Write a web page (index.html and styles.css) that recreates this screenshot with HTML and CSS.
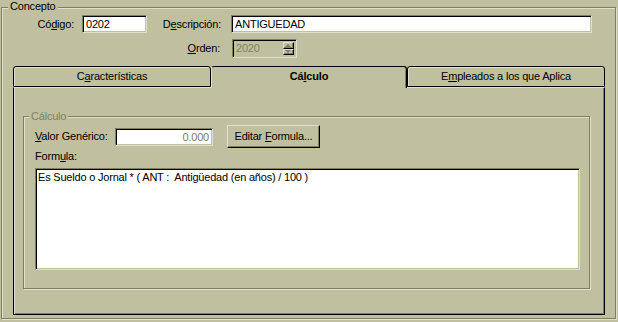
FILE: index.html
```html
<!DOCTYPE html>
<html lang="es">
<head>
    <meta charset="UTF-8">
    <title>Concepto</title>
    <link rel="stylesheet" href="styles.css">
</head>
<body>
    <div class="group concepto">
        <div class="group-title">Concepto</div>

        <div class="fields">
            <label class="lbl">Có<u>d</u>igo:</label>
            <div class="edit codigo">0202</div>
            <label class="lbl">D<u>e</u>scripción:</label>
            <div class="edit">ANTIGUEDAD</div>

            <label class="lbl row2"><u>O</u>rden:</label>
            <div class="edit spin row2">
                <span class="spin-text">2020</span>
                <span class="spin-btns">
                    <span class="spin-btn"><span class="arrow up"></span></span>
                    <span class="spin-btn"><span class="arrow down"></span></span>
                </span>
            </div>
        </div>

        <div class="tabs">
            <div class="tab">C<u>a</u>racterísticas</div>
            <div class="tab active">Cá<u>l</u>culo</div>
            <div class="tab">E<u>m</u>pleados a los que Aplica</div>
        </div>

        <div class="panel">
            <div class="group calculo">
                <div class="group-title disabled">Cálculo</div>

                <div class="valor-row">
                    <label class="valor-lbl"><u>V</u>alor Genérico:</label>
                    <div class="edit valor">0.000</div>
                    <button class="btn"><span>Editar <u>F</u>ormula...</span></button>
                </div>

                <div class="formula-lbl">Form<u>u</u>la:</div>
                <div class="edit formula">Es Sueldo o Jornal * ( ANT :  Antigüedad (en años) / 100 )</div>
            </div>
        </div>
    </div>
</body>
</html>
```

FILE: styles.css
```css
body {
    margin: 0;
    width: 618px;
    height: 322px;
    overflow: hidden;
    background: #c0c0a0;
    color: #000000;
    font-family: 'Liberation Sans', Arial, sans-serif;
    font-size: 11px;
    line-height: 13px;
    letter-spacing: -0.2px;
}

u {
    text-decoration-thickness: 1px;
    text-underline-offset: 1px;
}

/* etched group box */
.group {
    box-sizing: border-box;
    border: 1px solid #808060;
    box-shadow: inset 1px 1px #e0e0d0, 1px 1px #e0e0d0;
    display: flex;
    flex-direction: column;
}

.group-title {
    align-self: flex-start;
    height: 13px;
    margin: -8px 0 0 6px;
    padding: 0 2px;
    background: #c0c0a0;
}

.group-title.disabled {
    color: #808060;
    margin-top: -7px;
    margin-left: 5px;
}

.concepto {
    margin: 7px 2px 3px 1px;
    height: 312px;
}

/* top fields */
.fields {
    display: grid;
    grid-template-columns: 80px 65px 84px 361px;
    grid-template-rows: 18px 19px;
    row-gap: 6px;
    margin-top: 2px;
}

.lbl {
    text-align: right;
    padding-right: 8px;
    align-self: center;
}

.lbl.row2 {
    grid-column: 3;
    padding-right: 11px;
}

.lbl:nth-child(3) {
    padding-right: 10px;
}

.edit {
    box-sizing: border-box;
    background: #ffffff;
    border-top: 1px solid #808060;
    border-left: 1px solid #808060;
    border-right: 1px solid #e0e0d0;
    border-bottom: 1px solid #e0e0d0;
    box-shadow: inset 1px 1px #000000, inset -1px -1px #c0c0a0;
    padding: 2px 3px;
    white-space: pre;
}

.spin {
    grid-column: 4;
    width: 65px;
    margin-left: 1px;
    background: #c0c0a0;
    color: #808060;
    display: flex;
    justify-content: space-between;
    padding: 2px 2px 2px 3px;
}

.spin-btns {
    display: flex;
    flex-direction: column;
    width: 11px;
}

.spin-btn {
    flex: 1;
    box-sizing: border-box;
    border-top: 1px solid #e0e0d0;
    border-left: 1px solid #e0e0d0;
    border-right: 1px solid #000000;
    border-bottom: 1px solid #000000;
    box-shadow: inset -1px -1px #808060;
    display: flex;
    align-items: center;
    justify-content: center;
}

.arrow {
    width: 0;
    height: 0;
    margin-right: 1px;
    border-left: 3px solid transparent;
    border-right: 3px solid transparent;
}

.arrow.up {
    border-bottom: 3px solid #808060;
}

.arrow.down {
    border-top: 3px solid #808060;
}

/* tabs */
.tabs {
    display: flex;
    margin: 8px 0 0 11px;
    width: 592px;
    height: 21px;
}

.tab {
    box-sizing: border-box;
    width: 198px;
    height: 21px;
    border: 1px solid #000000;
    border-radius: 3px 3px 0 0;
    box-shadow: inset 1px 1px #e0e0d0;
    text-align: center;
    line-height: 19px;
}

.tab.active {
    width: 196px;
    height: 22px;
    margin-bottom: -1px;
    border-bottom: none;
    border-left-color: #e0e0d0;
    box-shadow: inset -1px 0 #808060;
    background: #c0c0a0;
    font-weight: bold;
    position: relative;
    z-index: 1;
}

.panel {
    box-sizing: border-box;
    margin-left: 11px;
    width: 592px;
    height: 228px;
    border-top: 1px solid #e0e0d0;
    border-left: 1px solid #000000;
    border-right: 1px solid #000000;
    border-bottom: 1px solid #000000;
    box-shadow: inset 1px 0 #e0e0d0, inset -1px -1px #808060;
    display: flex;
    flex-direction: column;
}

.calculo {
    margin: 28px 14px 25px 9px;
    flex: 1;
}

.valor-row {
    display: flex;
    align-items: center;
    height: 23px;
    margin: 2px 0 0 11px;
}

.valor-lbl {
    width: 80px;
}

.valor {
    width: 98px;
    height: 18px;
    text-align: right;
    color: #808060;
}

.btn {
    box-sizing: border-box;
    width: 93px;
    height: 23px;
    margin-left: 14px;
    padding: 0;
    font: inherit;
    letter-spacing: inherit;
    color: #000000;
    background: #c0c0a0;
    border-top: 1px solid #e0e0d0;
    border-left: 1px solid #e0e0d0;
    border-right: 1px solid #000000;
    border-bottom: 1px solid #000000;
    box-shadow: inset -1px -1px #808060;
}

.formula-lbl {
    margin: 2px 0 0 11px;
}

.formula {
    margin: 5px 0 0 11px;
    width: 545px;
    height: 102px;
    padding: 2px 2px;
}
```
